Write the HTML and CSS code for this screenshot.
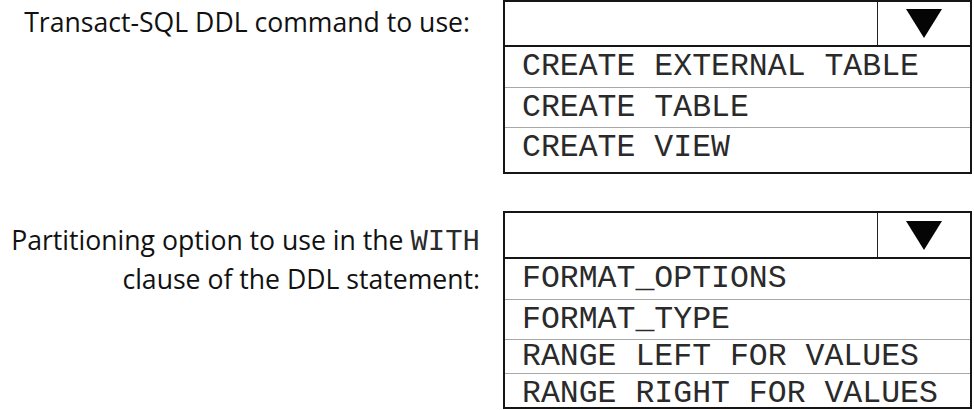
FILE: index.html
```html
<!DOCTYPE html>
<html>
<head>
<meta charset="utf-8">
<link rel="stylesheet" href="styles.css">
</head>
<body>
<div class="page">
  <div class="question q1">
    <div class="label label-1">Transact-SQL DDL command to use:</div>
    <div class="dropdown dd-1">
      <div class="dd-head">
        <div class="dd-value"></div>
        <div class="dd-btn"><span class="tri"></span></div>
      </div>
      <div class="opt">CREATE EXTERNAL TABLE</div>
      <div class="opt">CREATE TABLE</div>
      <div class="opt opt-last">CREATE VIEW</div>
    </div>
  </div>
  <div class="question q2">
    <div class="label label-2">Partitioning option to use in the <span class="code">WITH</span><br>clause of the DDL statement:</div>
    <div class="dropdown dd-2">
      <div class="dd-head">
        <div class="dd-value"></div>
        <div class="dd-btn"><span class="tri"></span></div>
      </div>
      <div class="opt">FORMAT_OPTIONS</div>
      <div class="opt">FORMAT_TYPE</div>
      <div class="opt opt-short">RANGE LEFT FOR VALUES</div>
      <div class="opt opt-end">RANGE RIGHT FOR VALUES</div>
    </div>
  </div>
</div>
</body>
</html>
```
FILE: styles.css
```css
* { box-sizing: border-box; }
html, body { margin: 0; padding: 0; background: #fff; }
body { width: 974px; height: 410px; overflow: hidden; }

.page {
  display: flex;
  flex-direction: column;
  gap: 37px;
}

.question {
  display: flex;
  align-items: flex-start;
}

.label {
  width: 503px;
  text-align: right;
  font-family: "Open Sans", sans-serif;
  font-size: 26.6px;
  line-height: 36px;
  color: #111;
  white-space: nowrap;
}
.label-1 { padding-right: 33px; padding-top: 4px; }
.label-2 { padding-right: 23px; padding-top: 11px; }

.code {
  font-family: "Liberation Mono", monospace;
  font-size: 29px;
  color: #2a2a2a;
}

.dropdown {
  width: 469px;
  border: 2px solid #151515;
  display: flex;
  flex-direction: column;
}
.dd-1 { height: 174px; }
.dd-2 { height: 198px; }

.dd-head {
  display: flex;
  height: 45px;
  border-bottom: 2px solid #151515;
  flex: none;
}
.dd-2 .dd-head { height: 46px; }
.dd-value { flex: 1; }
.dd-btn {
  width: 93px;
  border-left: 1.5px solid #222;
  display: flex;
  align-items: center;
  justify-content: center;
}
.tri {
  width: 0;
  height: 0;
  border-left: 18.5px solid transparent;
  border-right: 18.5px solid transparent;
  border-top: 29px solid #050505;
}

.opt {
  font-family: "Liberation Mono", monospace;
  font-size: 31.5px;
  color: #2a2a2a;
  height: 40px;
  line-height: 40px;
  padding-left: 17px;
  white-space: nowrap;
  flex: none;
}
.opt + .opt { border-top: 1px solid #a8a8a8; height: 40px; line-height: 39px; }
.opt-last { flex: 1; }
.opt + .opt.opt-short { height: 34px; line-height: 33px; }
.opt-end { flex: 1; }
```
